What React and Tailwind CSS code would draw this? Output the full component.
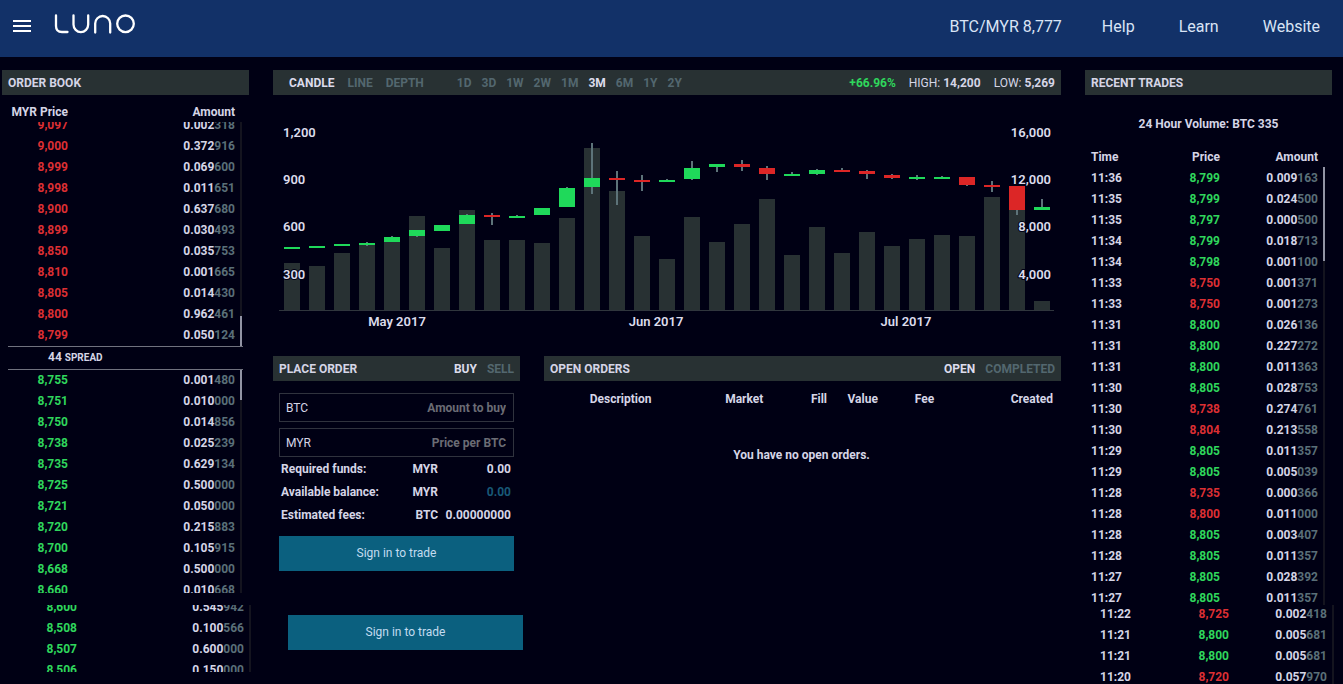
import clsx from 'clsx';

const asks = [
  ['9,097', '0.002318'],
  ['9,000', '0.372916'],
  ['8,999', '0.069600'],
  ['8,998', '0.011651'],
  ['8,900', '0.637680'],
  ['8,899', '0.030493'],
  ['8,850', '0.035753'],
  ['8,810', '0.001665'],
  ['8,805', '0.014430'],
  ['8,800', '0.962461'],
  ['8,799', '0.050124'],
];

const bids = [
  ['8,755', '0.001480'],
  ['8,751', '0.010000'],
  ['8,750', '0.014856'],
  ['8,738', '0.025239'],
  ['8,735', '0.629134'],
  ['8,725', '0.500000'],
  ['8,721', '0.050000'],
  ['8,720', '0.215883'],
  ['8,700', '0.105915'],
  ['8,668', '0.500000'],
  ['8,660', '0.010668'],
];

const lowerBids = [
  ['8,600', '0.545942'],
  ['8,508', '0.100566'],
  ['8,507', '0.600000'],
  ['8,506', '0.150000'],
];

const trades = [
  ['11:36', '8,799', '0.009163', 'up'],
  ['11:35', '8,799', '0.024500', 'up'],
  ['11:35', '8,797', '0.000500', 'up'],
  ['11:34', '8,799', '0.018713', 'up'],
  ['11:34', '8,798', '0.001100', 'up'],
  ['11:33', '8,750', '0.001371', 'down'],
  ['11:33', '8,750', '0.001273', 'down'],
  ['11:31', '8,800', '0.026136', 'up'],
  ['11:31', '8,800', '0.227272', 'up'],
  ['11:31', '8,800', '0.011363', 'up'],
  ['11:30', '8,805', '0.028753', 'up'],
  ['11:30', '8,738', '0.274761', 'down'],
  ['11:30', '8,804', '0.213558', 'down'],
  ['11:29', '8,805', '0.011357', 'up'],
  ['11:29', '8,805', '0.005039', 'up'],
  ['11:28', '8,735', '0.000366', 'down'],
  ['11:28', '8,800', '0.011000', 'down'],
  ['11:28', '8,805', '0.003407', 'up'],
  ['11:28', '8,805', '0.011357', 'up'],
  ['11:27', '8,805', '0.028392', 'up'],
  ['11:27', '8,805', '0.011357', 'up'],
];

const olderTrades = [
  ['11:22', '8,725', '0.002418', 'down'],
  ['11:21', '8,800', '0.005681', 'up'],
  ['11:21', '8,800', '0.005681', 'up'],
  ['11:20', '8,720', '0.057970', 'down'],
];

// [volume top, body top, body bottom, wick top, wick bottom, direction]
const candles = [
  [168, 152, 154, 152, 154, 'up'],
  [171, 151, 153, 151, 153, 'up'],
  [158, 149, 151, 149, 151, 'up'],
  [150, 148, 150, 147, 151, 'up'],
  [147, 142, 147, 141, 147, 'up'],
  [121, 135, 141, 135, 142, 'up'],
  [153, 130, 136, 130, 136, 'up'],
  [115, 120, 129, 119, 129, 'up'],
  [145, 120, 122, 118, 130, 'down'],
  [145, 121, 123, 120, 123, 'up'],
  [148, 113, 120, 113, 120, 'up'],
  [123, 93, 112, 92, 112, 'up'],
  [53, 83, 92, 48, 99, 'up'],
  [96, 83, 85, 76, 110, 'down'],
  [141, 85, 87, 80, 96, 'down'],
  [164, 85, 87, 84, 87, 'up'],
  [122, 73, 84, 66, 85, 'up'],
  [147, 69, 72, 69, 77, 'up'],
  [129, 69, 72, 65, 76, 'down'],
  [104, 73, 79, 71, 85, 'down'],
  [160, 79, 81, 77, 81, 'up'],
  [132, 75, 79, 74, 80, 'up'],
  [158, 75, 77, 73, 77, 'down'],
  [137, 76, 79, 75, 84, 'down'],
  [151, 80, 83, 79, 84, 'down'],
  [144, 82, 84, 80, 85, 'up'],
  [140, 82, 84, 81, 84, 'up'],
  [141, 82, 90, 82, 91, 'down'],
  [102, 90, 92, 86, 97, 'down'],
  [110, 91, 115, 91, 120, 'down'],
  [206, 112, 115, 104, 115, 'up'],
];

const yLabels = [
  { y: 42, volume: '1,200', price: '16,000' },
  { y: 89, volume: '900', price: '12,000' },
  { y: 136, volume: '600', price: '8,000' },
  { y: 184, volume: '300', price: '4,000' },
];

const xLabels = [
  { x: 124, label: 'May 2017' },
  { x: 383, label: 'Jun 2017' },
  { x: 633, label: 'Jul 2017' },
];

const chartTypes = ['CANDLE', 'LINE', 'DEPTH'];
const ranges = ['1D', '3D', '1W', '2W', '1M', '3M', '6M', '1Y', '2Y'];

function Logo() {
  return (
    <svg width="82" height="20" viewBox="0 0 82 20" fill="none" stroke="#fff" strokeWidth="2.3" strokeLinecap="round" role="img" aria-label="Luno">
      <path d="M2 1.5V12C2 16 4.5 18 8 18H13.5" />
      <path d="M19.5 1.5V10.5A7.3 7.5 0 0 0 34.2 10.5V1.5" />
      <path d="M41.2 18.5V9.5A7.5 7.5 0 0 1 56.2 9.5V18.5" />
      <circle cx="71.5" cy="9.8" r="8.3" />
    </svg>
  );
}

function Header() {
  return (
    <header className="h-[57px] bg-[#123168] flex items-center justify-between pl-[13px] pr-[23px] text-base font-normal text-[#d9e4f5]">
      <div className="flex items-center gap-[23px]">
        <button aria-label="Menu" className="flex flex-col gap-[3px] -mt-[6px]">
          <span className="block w-[18px] h-[2px] bg-white" />
          <span className="block w-[18px] h-[2px] bg-white" />
          <span className="block w-[18px] h-[2px] bg-white" />
        </button>
        <a href="#" className="-mt-[10px]"><Logo /></a>
      </div>
      <nav className="flex gap-11 -mt-1">
        <a href="#" className="-mr-1">BTC/MYR 8,777</a>
        <a href="#">Help</a>
        <a href="#">Learn</a>
        <a href="#">Website</a>
      </nav>
    </header>
  );
}

function PanelBar({ children }) {
  return (
    <div className="h-[25px] px-[6px] bg-[#283133] flex items-center justify-between">
      {children}
    </div>
  );
}

function Tab({ active, children }) {
  return (
    <button className={active ? 'text-[#dcdcec]' : 'text-[#53676f]'}>{children}</button>
  );
}

function Amount({ value }) {
  return (
    <>
      {value.slice(0, 5)}
      <span className="text-[#5a6f78]">{value.slice(5)}</span>
    </>
  );
}

function BookTable({ rows, side }) {
  return (
    <table className="w-full text-right">
      <tbody>
        {rows.map(([price, amount]) => (
          <tr key={price} className="h-[21px]">
            <td className={clsx('w-[60px]', side === 'ask' ? 'text-[#dc2f33]' : 'text-[#2fd65c]')}>{price}</td>
            <td className="pr-2"><Amount value={amount} /></td>
          </tr>
        ))}
      </tbody>
    </table>
  );
}

function TradeTable({ rows, header }) {
  return (
    <table className="w-full text-right">
      {header && (
        <thead>
          <tr className="h-[21px]">
            <th className="text-left">Time</th>
            <th>Price</th>
            <th className="w-[103px] pr-[5px]">Amount</th>
          </tr>
        </thead>
      )}
      <tbody>
        {rows.map(([time, price, amount, dir], i) => (
          <tr key={i} className="h-[21px]">
            <td className="text-left">{time}</td>
            <td className={dir === 'up' ? 'text-[#2fd65c]' : 'text-[#dc2f33]'}>{price}</td>
            <td className="w-[103px] pr-[5px]"><Amount value={amount} /></td>
          </tr>
        ))}
      </tbody>
    </table>
  );
}

function ScrollBar({ end, thumb }) {
  return (
    <div className={clsx('w-[2px] shrink-0 flex flex-col bg-[#14141f]', end && 'justify-end')}>
      {thumb && <div className={clsx('bg-[#9294a4]', thumb)} />}
    </div>
  );
}

function OrderBook() {
  return (
    <section>
      <PanelBar><h2>ORDER BOOK</h2></PanelBar>
      <div className="px-[6px] pt-[6px]">
        <table className="w-full text-right">
          <thead>
            <tr className="h-[21px]">
              <th className="w-[60px]">MYR Price</th>
              <th className="pr-2">Amount</th>
            </tr>
          </thead>
        </table>
        <div className="flex h-[224px] pr-[1px] overflow-hidden border-b border-[#70727e] box-content">
          <div className="flex-1 flex flex-col justify-end -mr-[3px] pb-px">
            <BookTable rows={asks} side="ask" />
          </div>
          <ScrollBar end thumb="h-[30px]" />
        </div>
        <div className="h-[22px] pl-10 leading-[21px]">44 <span className="text-[10px]">SPREAD</span></div>
        <div className="flex h-[223px] pr-[1px] overflow-hidden border-t border-[#70727e] box-content">
          <div className="flex-1 -mt-px -mr-[3px]">
            <BookTable rows={bids} side="bid" />
          </div>
          <ScrollBar thumb="h-[30px]" />
        </div>
      </div>
    </section>
  );
}

function Chart() {
  return (
    <svg viewBox="0 0 788 261" className="block w-full text-[13px] font-semibold" role="img" aria-label="Candle chart">
      {candles.map(([vol], i) => (
        <rect key={i} x={11 + i * 25} y={vol} width="16" height={215 - vol} fill="#283133" />
      ))}
      {candles.map(([, top, bottom, high, low, dir], i) => (
        <g key={i}>
          <rect x={18 + i * 25} y={high} width="2" height={low - high} fill="#5d7379" />
          <rect x={11 + i * 25} y={top} width="16" height={bottom - top} fill={dir === 'up' ? '#1fd95a' : '#dc2626'} />
        </g>
      ))}
      <rect x="6" y="215" width="775" height="1" fill="#30363d" />
      <g fill="#dcdcec" stroke="#000014" strokeWidth="2" paintOrder="stroke">
        {yLabels.map(({ y, volume, price }) => (
          <g key={y}>
            <text x="10" y={y}>{volume}</text>
            <text x="778" y={y} textAnchor="end">{price}</text>
          </g>
        ))}
        {xLabels.map(({ x, label }) => (
          <text key={label} x={x} y="231" textAnchor="middle">{label}</text>
        ))}
      </g>
    </svg>
  );
}

function ChartPanel() {
  return (
    <section>
      <PanelBar>
        <div className="flex gap-[33px] pl-[10px]">
          <div className="flex gap-[13px]">
            {chartTypes.map((t) => <Tab key={t} active={t === 'CANDLE'}>{t}</Tab>)}
          </div>
          <div className="flex gap-[10px]">
            {ranges.map((r) => <Tab key={r} active={r === '3M'}>{r}</Tab>)}
          </div>
        </div>
        <div className="flex gap-[13px] font-normal">
          <span className="font-bold text-[#2fd65c]">+66.96%</span>
          <span>HIGH: <b>14,200</b></span>
          <span>LOW: <b>5,269</b></span>
        </div>
      </PanelBar>
      <Chart />
    </section>
  );
}

function OrderInput({ id, unit, placeholder }) {
  return (
    <div className="h-[29px] border border-[#30333e] flex items-center px-[6px]">
      <label htmlFor={id} className="font-normal">{unit}</label>
      <input id={id} placeholder={placeholder} className="flex-1 min-w-0 pr-[1px] bg-transparent text-right outline-none placeholder:text-[#6b6c74]" />
    </div>
  );
}

function SignInButton() {
  return (
    <button className="w-full h-[35px] pb-[2px] bg-[#0b607f] font-normal text-[#c3dcf0]">Sign in to trade</button>
  );
}

function PlaceOrder() {
  return (
    <section>
      <PanelBar>
        <h2>PLACE ORDER</h2>
        <div className="flex gap-[10px]">
          <Tab active>BUY</Tab>
          <Tab>SELL</Tab>
        </div>
      </PanelBar>
      <form className="px-[6px] pt-3">
        <div className="flex flex-col gap-[6px]">
          <OrderInput id="amount" unit="BTC" placeholder="Amount to buy" />
          <OrderInput id="price" unit="MYR" placeholder="Price per BTC" />
        </div>
        <table className="w-full mb-[10px] text-right">
          <tbody>
            <tr className="h-[23px]">
              <th className="pl-[2px] text-left">Required funds:</th>
              <td>MYR</td>
              <td className="w-[76px] pr-[3px]">0.00</td>
            </tr>
            <tr className="h-[23px]">
              <th className="pl-[2px] text-left">Available balance:</th>
              <td>MYR</td>
              <td className="w-[76px] pr-[3px] text-[#185877]">0.00</td>
            </tr>
            <tr className="h-[23px]">
              <th className="pl-[2px] text-left">Estimated fees:</th>
              <td>BTC</td>
              <td className="w-[76px] pr-[3px]">0.00000000</td>
            </tr>
          </tbody>
        </table>
        <SignInButton />
      </form>
    </section>
  );
}

function OpenOrders() {
  return (
    <section>
      <PanelBar>
        <h2>OPEN ORDERS</h2>
        <div className="flex gap-[10px]">
          <Tab active>OPEN</Tab>
          <Tab>COMPLETED</Tab>
        </div>
      </PanelBar>
      <div className="pt-[7px] pl-[2px]">
        <table className="w-full table-fixed">
          <thead>
            <tr className="h-[21px]">
              <th className="w-[29%]">Description</th>
              <th className="w-[19%]">Market</th>
              <th className="w-[10%]">Fill</th>
              <th className="w-[7%]">Value</th>
              <th className="w-[17%]">Fee</th>
              <th className="pr-2 text-right">Created</th>
            </tr>
          </thead>
          <tbody>
            <tr>
              <td colSpan="6" className="h-[91px] pr-1 text-center">You have no open orders.</td>
            </tr>
          </tbody>
        </table>
      </div>
    </section>
  );
}

function RecentTrades() {
  return (
    <section>
      <PanelBar><h2>RECENT TRADES</h2></PanelBar>
      <p className="h-[51px] pt-[19px] leading-[21px] text-center">24 Hour Volume: BTC 335</p>
      <div className="flex h-[459px] pl-[6px] pr-[7px] overflow-hidden">
        <div className="flex-1">
          <TradeTable header rows={trades} />
        </div>
        <div className="flex pt-[21px]">
          <ScrollBar thumb="h-[94px]" />
        </div>
      </div>
    </section>
  );
}

export default function App() {
  return (
    <div className="min-h-screen bg-[#000014] font-['Roboto',sans-serif] text-xs font-bold text-[#d5d5e6]">
      <Header />
      <main className="pt-[13px]">
        <div className="grid grid-cols-[247px_1fr_247px] gap-6 pl-[2px] pr-[11px]">
          <OrderBook />
          <div>
            <ChartPanel />
            <div className="grid grid-cols-[247px_1fr] gap-6">
              <PlaceOrder />
              <OpenOrders />
            </div>
          </div>
          <RecentTrades />
        </div>

        {/* continuation of the three columns below the fold */}
        <div className="grid grid-cols-[247px_1fr_247px] gap-6 pl-[11px] pr-[2px]">
          <div className="flex h-[67px] pl-[6px] pr-[7px] overflow-hidden">
            <div className="flex-1 -mt-[9px] -mr-[3px]">
              <BookTable rows={lowerBids} side="bid" />
            </div>
            <ScrollBar />
          </div>
          <div className="w-[247px] px-[6px] pt-[10px]">
            <SignInButton />
          </div>
          <div className="flex h-[79px] pl-[6px] pr-[7px] overflow-hidden">
            <div className="flex-1 -mt-[2px]">
              <TradeTable rows={olderTrades} />
            </div>
            <ScrollBar />
          </div>
        </div>
      </main>
    </div>
  );
}
